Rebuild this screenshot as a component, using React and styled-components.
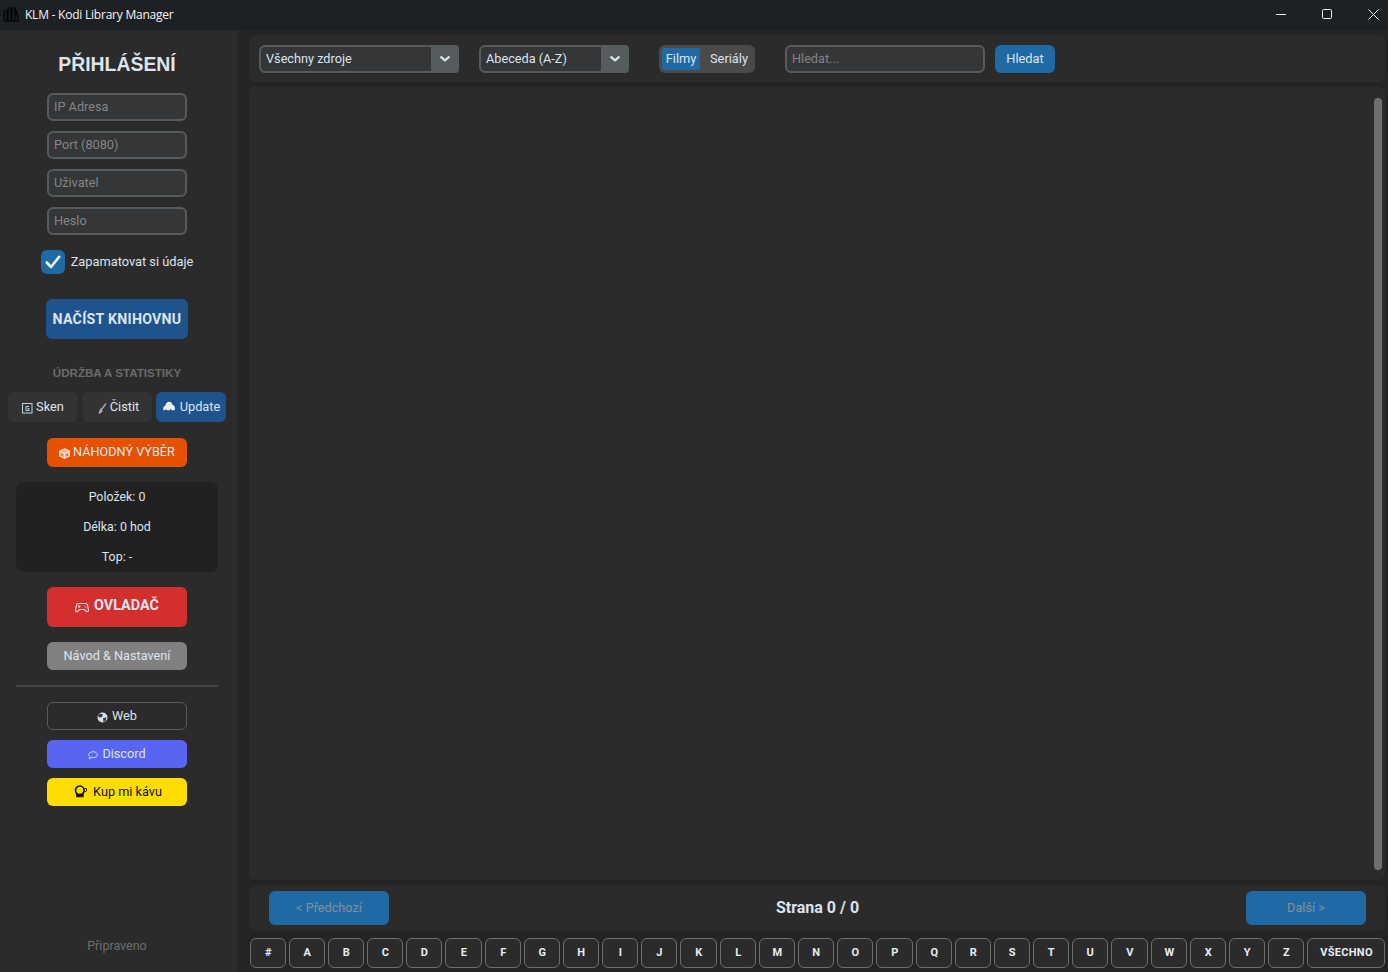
import React from "react";
import styled, { createGlobalStyle } from "styled-components";

const Global = createGlobalStyle`
  * { box-sizing: border-box; }
  html, body { margin: 0; padding: 0; background: #242424; }
  body { font-family: Roboto, "Liberation Sans", sans-serif; color: #dce4ee; overflow: hidden; }
`;

const Shell = styled.div`
  width: 1388px; height: 972px; display: flex; flex-direction: column; overflow: hidden; background: #242424;
`;
const TitleBar = styled.header`
  height: 30px; flex: none; background: #1e2124; display: flex; align-items: center; padding-left: 3px;
`;
const TitleText = styled.span`
  font: 400 12px "Open Sans", "Noto Sans", sans-serif; color: #f4f4f4; margin-left: 5px; letter-spacing: -0.23px; padding-bottom: 2px;
`;
const WindowControls = styled.div`
  margin-left: auto; margin-right: -8px; display: flex; align-items: center; height: 100%;
`;
const WindowButton = styled.div`
  width: 46px; height: 100%; display: flex; align-items: center; justify-content: center; color: #e8e8e8; padding-bottom: 2px;
`;
const Body = styled.div`
  flex: 1; display: flex; min-height: 0;
`;
const Sidebar = styled.aside`
  width: 238px; flex: none; background: #2b2b2b; padding: 0 4px 0 0; display: flex; flex-direction: column; align-items: center;
`;
const Heading = styled.h1`
  margin: 22px 0 0; height: 25px; font: 700 19.4px/25px "Liberation Sans", Arial, sans-serif; color: #dce4ee;
`;
const FieldStack = styled.div`
  display: flex; flex-direction: column; gap: 10px; margin-top: 16px;
`;
const Field = styled.div`
  width: ${p => p.$w || 140}px; height: 28px; background: #343638; border: 2px solid #565b5e; border-radius: 6px;
  padding: 0 5px; font-size: 12.7px; line-height: 24px; color: #858585; flex: none;
`;
const CheckRow = styled.div`
  margin-top: 15px; display: flex; align-items: center; gap: 6px; font-size: 12.8px; line-height: 22px; height: 24px;
`;
const CheckBox = styled.span`
  width: 24px; height: 24px; border-radius: 6px; background: #1f6aa5; display: flex; align-items: center; justify-content: center;
`;
const PrimaryButton = styled.div`
  margin-top: 25px; width: 142px; height: 40px; border-radius: 6px; background: #1f538d; display: flex; align-items: center; justify-content: center;
  font-size: 14.2px; font-weight: 700; padding-bottom: 1px; color: #dce4ee; letter-spacing: 0.25px;
`;
const SectionLabel = styled.div`
  margin-top: 26px; font: 700 11.6px/15px "Liberation Sans", Arial, sans-serif; color: #6a6a6a; height: 15px;
`;
const ToolRow = styled.div`
  margin-top: 12px; display: flex; gap: 4px;
`;
const ToolButton = styled.div`
  width: 70px; height: 30px; border-radius: 6px; background: ${p => p.$accent ? "#1f538d" : "#333333"};
  display: flex; align-items: center; justify-content: center; gap: ${p => p.$gap}px; font-size: 12.8px; color: #dce4ee; white-space: nowrap; padding: 0 0 2px ${p => p.$pl || 0}px;
`;
const Wide = styled.div`
  width: 140px; flex: none; height: ${p => p.$h || 28}px; margin-top: ${p => p.$mt || 0}px; border-radius: 6px;
  background: ${p => p.$bg || "transparent"}; color: ${p => p.$fg || "#dce4ee"};
  border: ${p => p.$outline ? "1px solid #565b5e" : "none"};
  font-size: ${p => p.$fs || 12.7}px; font-weight: ${p => p.$bold ? 700 : 400};
  display: flex; align-items: center; justify-content: center; gap: ${p => p.$gap ?? 3}px; white-space: nowrap;
  padding: 0 0 ${p => p.$pb ?? 1}px ${p => p.$pl || 0}px;
`;
const Stats = styled.div`
  margin-top: 15px; width: 202px; height: 90px; flex: none; border-radius: 8px; background: #212121; display: flex; flex-direction: column;
`;
const StatLine = styled.div`
  height: 30px; display: flex; align-items: center; justify-content: center; font-size: 12.4px; color: #dce4ee; padding-bottom: 2px;
`;
const Divider = styled.div`
  margin-top: 15px; width: 202px; height: 2px; flex: none; background: #454545;
`;
const Status = styled.div`
  margin-top: auto; margin-bottom: 19px; font-size: 12.5px; color: #6e6e6e;
`;
const Main = styled.main`
  flex: 1; min-width: 0; padding: 5px 3px 4px 11px; display: flex; flex-direction: column;
`;
const Toolbar = styled.section`
  height: 47px; flex: none; background: #2b2b2b; border-radius: 6px; display: flex; align-items: center; padding: 0 10px;
`;
const Select = styled.div`
  width: ${p => p.$w}px; height: 28px; margin-right: ${p => p.$mr}px; background: #343638; border: 2px solid #565b5e; border-radius: 6px; flex: none;
  display: flex; align-items: stretch; font-size: 12.7px; color: #dce4ee;
`;
const SelectLabel = styled.span`
  flex: 1; padding-left: 5px; line-height: 24px;
`;
const SelectArrow = styled.span`
  background: #565b5e; display: flex; align-items: center; justify-content: center; border-radius: 0 4px 4px 0; margin: -2px -2px -2px 0; height: 28px; width: 28px;
`;
const Segmented = styled.div`
  width: 96px; height: 28px; margin-right: 30px; background: #4a4a4a; border-radius: 6px; padding: 3px; display: flex; flex: none;
`;
const Segment = styled.span`
  width: ${p => p.$w}px; height: 22px; line-height: 21px; text-align: center; font-size: 12.8px; color: #dce4ee; border-radius: 3px;
  background: ${p => p.$on ? "#1f6aa5" : "transparent"}; padding-left: ${p => p.$pl || 0}px;
`;
const SearchButton = styled.div`
  width: 60px; height: 28px; margin-left: 10px; border-radius: 6px; background: #1f6aa5; font-size: 12.8px; line-height: 27px; text-align: center; color: #dce4ee; flex: none;
`;
const Content = styled.section`
  margin-top: 5px; height: 793px; flex: none; background: #2b2b2b; border-radius: 6px; padding: 11px 3px 10px 0; display: flex; justify-content: flex-end;
`;
const ScrollThumb = styled.div`
  width: 8px; background: #6e6e6e; border-radius: 4px;
`;
const Pager = styled.section`
  margin-top: 6px; height: 44px; flex: none; background: #2b2b2b; border-radius: 6px; padding: 5px 19px 5px 20px; display: flex; justify-content: space-between;
`;
const PageButton = styled.div`
  width: 120px; height: 34px; border-radius: 6px; background: #1f6aa5; color: #858f99; font-size: 12.7px; line-height: 33px; text-align: center;
`;
const PageLabel = styled.div`
  font-size: 16px; font-weight: 700; line-height: 33px; color: #dce4ee;
`;
const LetterRow = styled.nav`
  margin-top: 8px; display: flex; gap: 3px; padding-left: 1px;
`;
const Letter = styled.div`
  flex: ${p => p.$wide ? "1 0 78px" : `0 0 ${p.$w || 36}px`}; height: 30px; border: 1px solid #6e6e6e; border-radius: 6px; background: #2b2b2b;
  font: 700 11px/27px Roboto, sans-serif; text-align: center; color: #e8edf2; letter-spacing: ${p => p.$wide ? 0.3 : 0.5}px; padding-left: 1px;
`;

const Ic = styled.svg`
  display: block; flex: none; transform: translateY(${p => p.$dy || 0}px);
`;

const Books = () => (
  <Ic $dy={-1} width="17" height="16" viewBox="0 0 17 16" fill="none" stroke="#000" strokeWidth="1.2">
    <path d="M1 15V5h3v10M5 15V2h3v13M9 15V2h3v13M13 4l2.500 11M1 15h15" />
  </Ic>
);
const Chevron = () => (
  <Ic width="10" height="6" viewBox="0 0 10 6" fill="none" stroke="#dce4ee" strokeWidth="2.200" strokeLinecap="round" strokeLinejoin="round">
    <path d="M1.200 1.200 5 4.400l3.800-3.200" />
  </Ic>
);
const Check = () => (
  <Ic width="16" height="14" viewBox="0 0 16 14" fill="none" stroke="#f2f6fa" strokeWidth="2.600" strokeLinecap="round" strokeLinejoin="round">
    <path d="M1.800 7.500 6 12 14.200 1.800" />
  </Ic>
);
const Scan = () => (
  <Ic $dy={2} width="11" height="11" viewBox="0 0 11 11" fill="none" stroke="#b9d4e4" strokeWidth="1">
    <rect x=".5" y=".5" width="9.500" height="9.500" /><path d="M7 3.500H4v4h3V5.500H5.500" />
  </Ic>
);
const Broom = () => (
  <Ic $dy={2} width="9" height="11" viewBox="0 0 9 11" fill="none" stroke="#aab0b6" strokeWidth="1.300">
    <path d="M8 .5 3.500 6.500" /><path d="M3 6 1 10.500l3-2.500z" fill="#aab0b6" />
  </Ic>
);
const Cloud = () => (
  <Ic width="12" height="10" viewBox="0 0 12 10" fill="#eef2f6">
    <path d="M.2 8.800C-.2 6.500 1 5.300 2.300 4.800 2.600 2.500 4 .6 6.300.7c1.900.1 3 1.500 3.200 3 1.500.3 2.500 1.800 2.400 3.500l-.2 2H9L7.800 8l-1.300 1.300H4.200L3 8.200 1.700 9.300H.5z" />
  </Ic>
);
const Dice = () => (
  <Ic $dy={2} width="11" height="11" viewBox="0 0 11 11" fill="none" stroke="#fbe3d8" strokeWidth="1.100">
    <path d="M5.500.8 10.300 3v5L5.500 10.300.7 8V3z" fill="#f0a888" /><path d="M.7 3l4.800 2.300L10.300 3M5.500 5.300v5" stroke="#fbe3d8" />
    <circle cx="3" cy="7" r=".8" fill="#c8430e" stroke="none" /><circle cx="8" cy="7" r=".8" fill="#c8430e" stroke="none" />
  </Ic>
);
const Pad = () => (
  <Ic $dy={2} width="14" height="11" viewBox="0 0 14 11" fill="none" stroke="#f7dede" strokeWidth="1.200">
    <path d="M3.500 1.500h7c1.200 0 1.800.8 2.100 2l.9 4.500c.2 1.500-1.500 2.300-2.500 1.200L9.300 7.500H4.700L3 9.200C2 10.300.3 9.500.5 8l.9-4.500c.3-1.200.9-2 2.100-2z" />
    <path d="M3 4.500h2.500M4.200 3.300v2.400M9 4h.6M10.500 5.400h.6" />
  </Ic>
);
const Globe = () => (
  <Ic $dy={2} width="11" height="11" viewBox="0 0 11 11">
    <circle cx="5.500" cy="5.500" r="5" fill="#d8e0e8" />
    <path d="M3 1.500 6 2.500 5 5 2 5.500 1 3.500zM6 6l3.500-.5-1 3.500L6.500 10z" fill="#33393e" />
  </Ic>
);
const Bubble = () => (
  <Ic $dy={2} width="10" height="9" viewBox="0 0 10 9" fill="none" stroke="#d5dbff" strokeWidth="1">
    <path d="M5.200.8c2.300 0 4.200 1.200 4.200 2.900s-1.900 2.900-4.200 2.900c-.6 0-1.100-.1-1.600-.2L1.200 8l.7-2.200C1 5.200.6 4.500.6 3.700.6 2 2.900.8 5.200.8z" />
  </Ic>
);
const Coffee = () => (
  <Ic width="13" height="13" viewBox="0 0 13 13">
    <circle cx="5.800" cy="5.300" r="4.300" fill="none" stroke="#111" strokeWidth="1.700" />
    <path d="M1.500 8c1.500 2.800 7 2.800 8.500 0l-.5 4.300H2.500z" fill="#1d1a00" />
    <path d="M10 3.500h2.500V6L10.500 7" fill="none" stroke="#2a2a00" strokeWidth="1" />
  </Ic>
);

const letters = "#ABCDEFGHIJKLMNOPQRSTUVWXYZ".split("");
const wider = { E: 37, K: 37, P: 37, V: 37 };

export default function App() {
  return (
    <Shell>
      <Global />
      <TitleBar>
        <Books />
        <TitleText>KLM - Kodi Library Manager</TitleText>
        <WindowControls>
          <WindowButton>
            <svg width="10" height="10" viewBox="0 0 10 10"><path d="M0 5.500h10" stroke="#eee" strokeWidth="1" /></svg>
          </WindowButton>
          <WindowButton>
            <svg width="10" height="10" viewBox="0 0 10 10" fill="none"><rect x=".5" y=".5" width="9" height="9" rx="1" stroke="#eee" strokeWidth="1" /></svg>
          </WindowButton>
          <WindowButton>
            <svg width="11" height="11" viewBox="0 0 11 11"><path d="M.5.500l10 10M10.500.500l-10 10" stroke="#eee" strokeWidth="1" /></svg>
          </WindowButton>
        </WindowControls>
      </TitleBar>
      <Body>
        <Sidebar>
          <Heading>PŘIHLÁŠENÍ</Heading>
          <FieldStack>
            <Field>IP Adresa</Field>
            <Field>Port (8080)</Field>
            <Field>Uživatel</Field>
            <Field>Heslo</Field>
          </FieldStack>
          <CheckRow><CheckBox><Check /></CheckBox>Zapamatovat si údaje</CheckRow>
          <PrimaryButton>NAČÍST KNIHOVNU</PrimaryButton>
          <SectionLabel>ÚDRŽBA A STATISTIKY</SectionLabel>
          <ToolRow>
            <ToolButton $gap={3}><Scan />Sken</ToolButton>
            <ToolButton $gap={3} $pl={3}><Broom />Čistit</ToolButton>
            <ToolButton $accent $gap={5} $pl={1}><Cloud />Update</ToolButton>
          </ToolRow>
          <Wide $mt={16} $h={29} $bg="#e65100" $gap={3} $pb={2}><Dice />NÁHODNÝ VÝBĚR</Wide>
          <Stats>
            <StatLine>Položek: 0</StatLine>
            <StatLine>Délka: 0 hod</StatLine>
            <StatLine>Top: -</StatLine>
          </Stats>
          <Wide $mt={15} $h={40} $bg="#d32f2f" $fs={14.4} $bold $gap={5} $pb={3}><Pad />OVLADAČ</Wide>
          <Wide $mt={15} $bg="#808080">Návod &amp; Nastavení</Wide>
          <Divider />
          <Wide $mt={15} $outline $gap={4}><Globe />Web</Wide>
          <Wide $mt={10} $bg="#5865f2" $gap={4}><Bubble />Discord</Wide>
          <Wide $mt={10} $bg="#ffdd00" $fg="#111" $gap={6} $pl={2}><Coffee />Kup mi kávu</Wide>
          <Status>Připraveno</Status>
        </Sidebar>
        <Main>
          <Toolbar>
            <Select $w={200} $mr={20}><SelectLabel>Všechny zdroje</SelectLabel><SelectArrow><Chevron /></SelectArrow></Select>
            <Select $w={150} $mr={30}><SelectLabel>Abeceda (A-Z)</SelectLabel><SelectArrow><Chevron /></SelectArrow></Select>
            <Segmented>
              <Segment $on $w={38}>Filmy</Segment>
              <Segment $w={52} $pl={6}>Seriály</Segment>
            </Segmented>
            <Field $w={200}>Hledat...</Field>
            <SearchButton>Hledat</SearchButton>
          </Toolbar>
          <Content><ScrollThumb /></Content>
          <Pager>
            <PageButton>&lt; Předchozí</PageButton>
            <PageLabel>Strana 0 / 0</PageLabel>
            <PageButton>Další &gt;</PageButton>
          </Pager>
          <LetterRow>
            {letters.map(l => <Letter key={l} $w={wider[l]}>{l}</Letter>)}
            <Letter $wide>VŠECHNO</Letter>
          </LetterRow>
        </Main>
      </Body>
    </Shell>
  );
}
